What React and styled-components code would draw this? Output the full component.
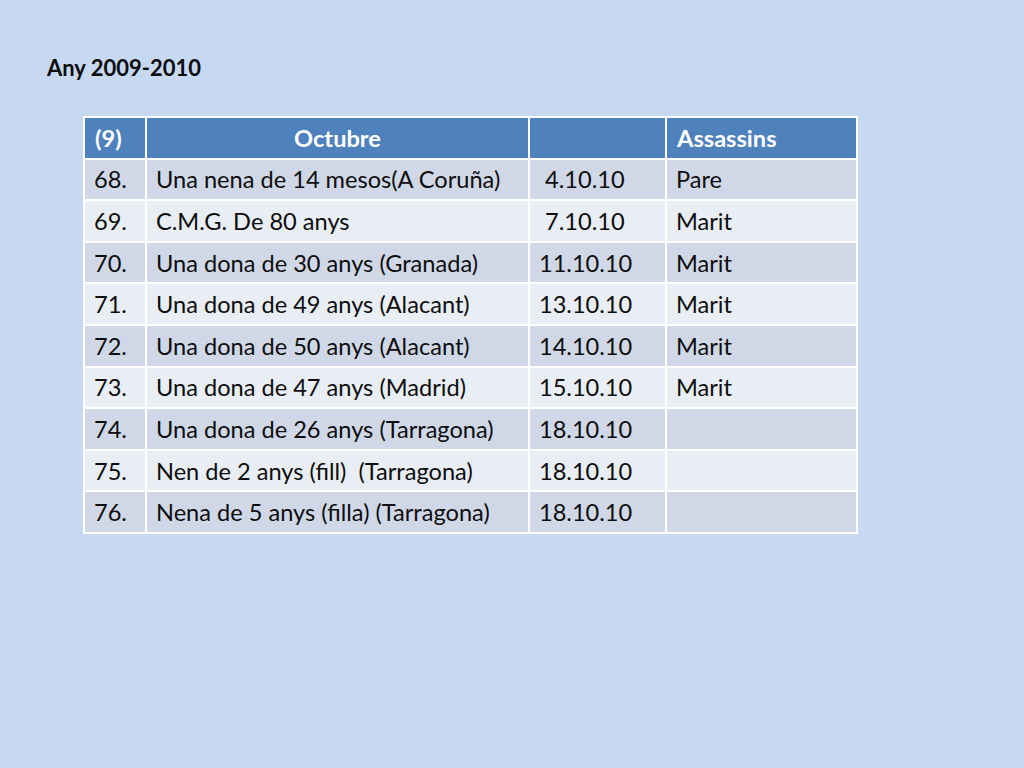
import React from "react";
import styled, { createGlobalStyle } from "styled-components";

const GlobalStyle = createGlobalStyle`
  html, body {
    margin: 0;
    padding: 0;
    background: #c6d9f1;
  }
  body {
    font-family: Lato, "Open Sans", "Liberation Sans", sans-serif;
    color: #0d0d0d;
  }
`;

const rows = [
  ["68.", "Una nena de 14 mesos(A Coruña)", " 4.10.10", "Pare"],
  ["69.", "C.M.G. De 80 anys", " 7.10.10", "Marit"],
  ["70.", "Una dona de 30 anys (Granada)", "11.10.10", "Marit"],
  ["71.", "Una dona de 49 anys (Alacant)", "13.10.10", "Marit"],
  ["72.", "Una dona de 50 anys (Alacant)", "14.10.10", "Marit"],
  ["73.", "Una dona de 47 anys (Madrid)", "15.10.10", "Marit"],
  ["74.", "Una dona de 26 anys (Tarragona)", "18.10.10", ""],
  ["75.", "Nen de 2 anys (fill)  (Tarragona)", "18.10.10", ""],
  ["76.", "Nena de 5 anys (filla) (Tarragona)", "18.10.10", ""],
];

const Slide = styled.div`
  width: 1024px;
  height: 768px;
  box-sizing: border-box;
  padding: 54px 0 0 47px;
`;

const Title = styled.h1`
  margin: 0;
  font-size: 22px;
  font-weight: 700;
  line-height: 28px;
`;

const Table = styled.table`
  margin: 34px 0 0 36px;
  border-collapse: collapse;
  border: 2px solid #fff;
  table-layout: fixed;
  width: 773px;
`;

const HeadCell = styled.th`
  background: #4f81bd;
  color: #fff;
  font-weight: 700;
  font-size: 23.6px;
  text-align: ${(p) => (p.$center ? "center" : "left")};
  border: 2px solid #fff;
  height: 39.6px;
  padding: 0 10px;
  white-space: pre;
`;

const Row = styled.tr`
  background: ${(p) => (p.$odd ? "#d0d8e8" : "#e9edf4")};
`;

const Cell = styled.td`
  border: 2px solid #fff;
  height: 39.6px;
  padding: 0 9px;
  font-size: 23.6px;
  white-space: pre;
`;

export default function App() {
  return (
    <>
      <GlobalStyle />
      <Slide>
        <Title>Any 2009-2010</Title>
        <Table>
          <colgroup>
            <col style={{ width: 62 }} />
            <col style={{ width: 383 }} />
            <col style={{ width: 137 }} />
            <col style={{ width: 191 }} />
          </colgroup>
          <thead>
            <tr>
              <HeadCell>(9)</HeadCell>
              <HeadCell $center>Octubre</HeadCell>
              <HeadCell></HeadCell>
              <HeadCell>Assassins</HeadCell>
            </tr>
          </thead>
          <tbody>
            {rows.map((r, i) => (
              <Row key={r[0]} $odd={i % 2 === 0}>
                {r.map((c, j) => (
                  <Cell key={j}>{c}</Cell>
                ))}
              </Row>
            ))}
          </tbody>
        </Table>
      </Slide>
    </>
  );
}
